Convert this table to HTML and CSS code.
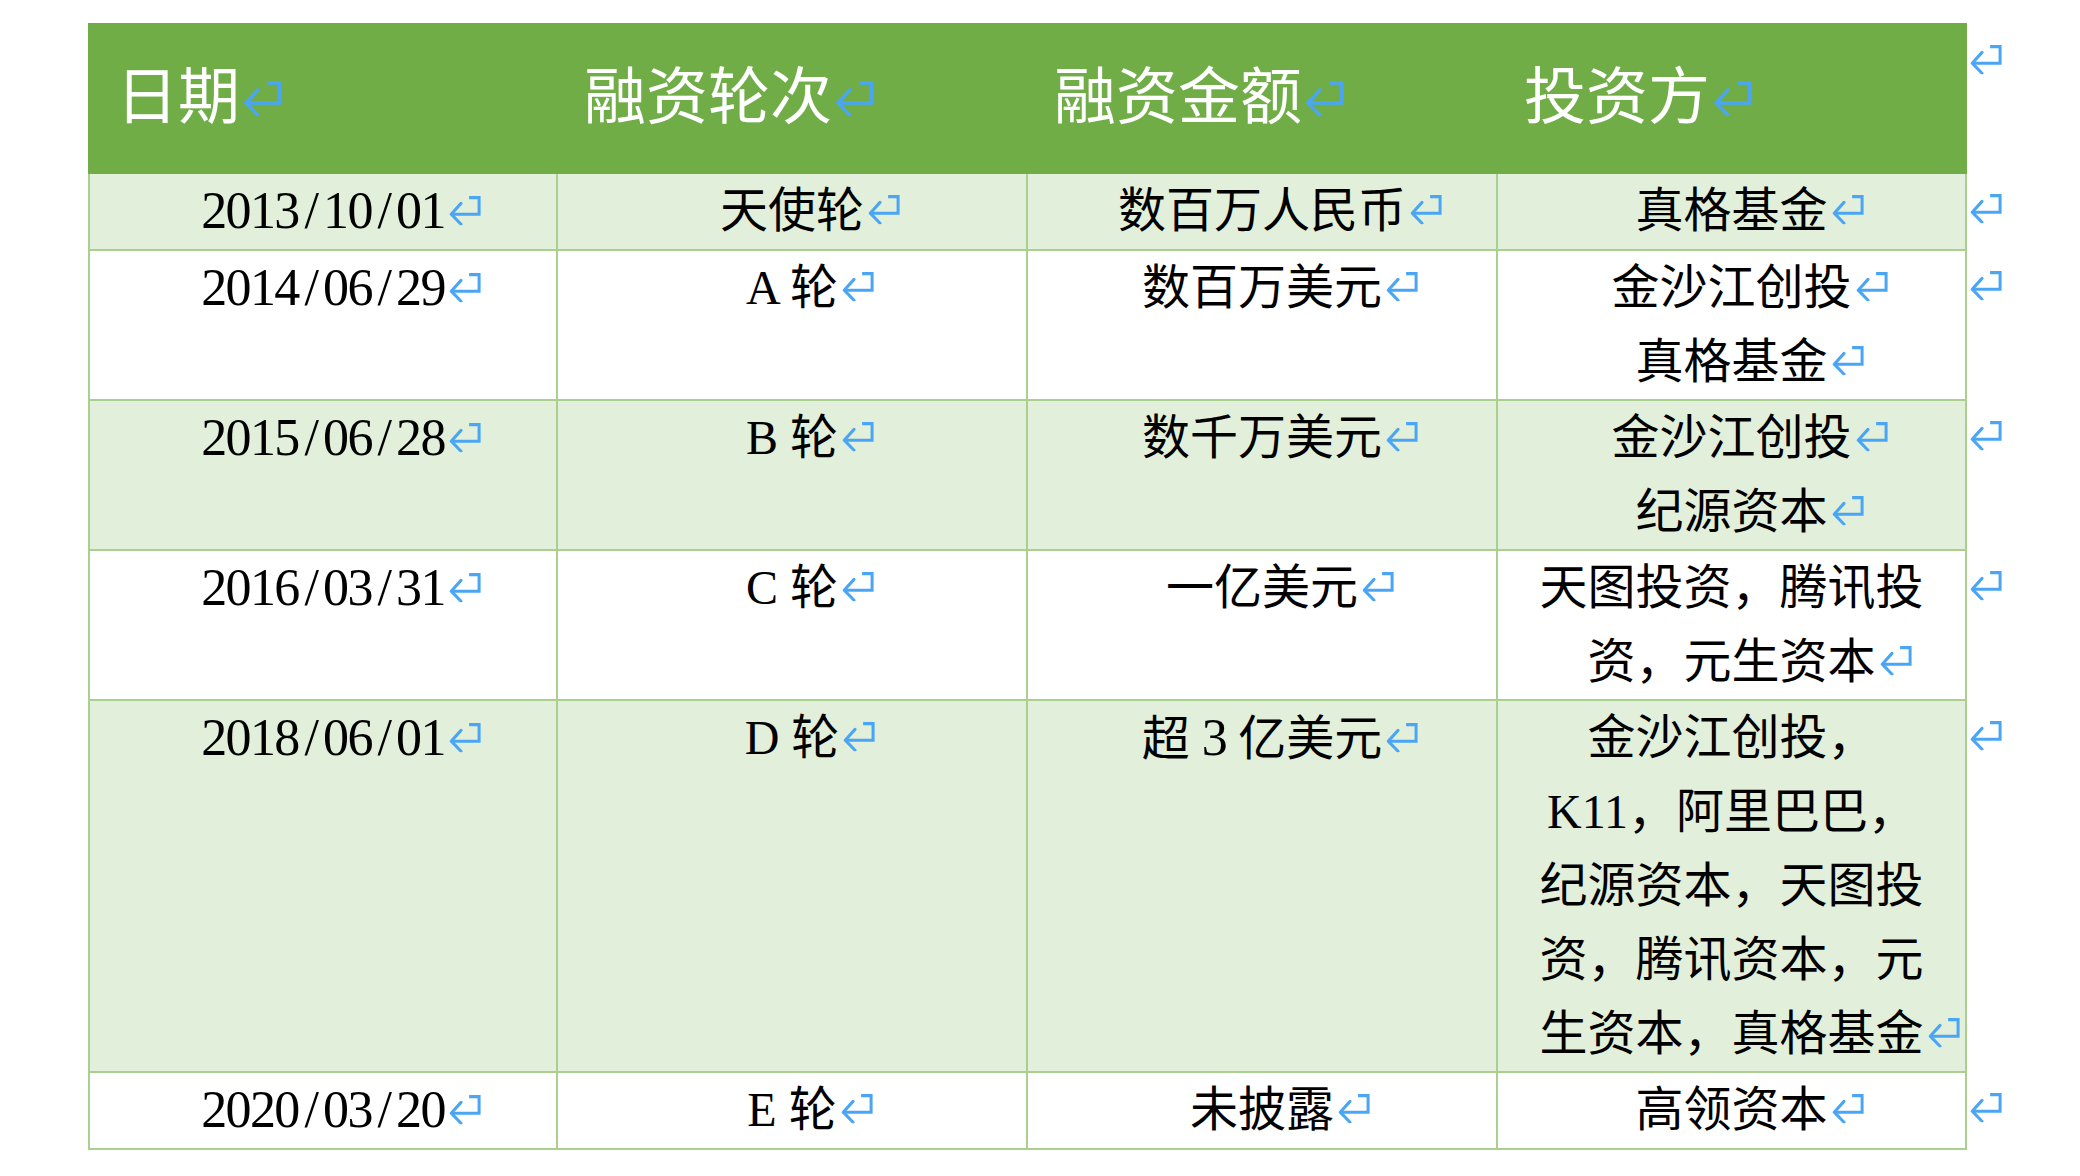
FILE: index.html
```html
<!DOCTYPE html>
<html lang="zh-CN">
<head>
<meta charset="utf-8">
<title>融资历程</title>
<link rel="stylesheet" href="styles.css">
</head>
<body>
<svg class="defs" aria-hidden="true">
  <symbol id="pm" viewBox="0 0 32 29">
    <path d="M20.5 1.6H30.4V18H3.2" fill="none" stroke="#4aa6f4" stroke-width="3"/>
    <path d="M12.5 7.3L2.8 18L12.5 28" fill="none" stroke="#4aa6f4" stroke-width="3" stroke-linecap="round" stroke-linejoin="round"/>
  </symbol>
</svg>
<table class="fin">
  <colgroup>
    <col class="c1"><col class="c"><col class="c"><col class="c4"><col class="m">
  </colgroup>
  <thead>
    <tr>
      <th>日期<svg class="pm"><use href="#pm"/></svg></th>
      <th>融资轮次<svg class="pm"><use href="#pm"/></svg></th>
      <th>融资金额<svg class="pm"><use href="#pm"/></svg></th>
      <th>投资方<svg class="pm"><use href="#pm"/></svg></th>
      <td class="end"><svg class="pm"><use href="#pm"/></svg></td>
    </tr>
  </thead>
  <tbody>
    <tr class="alt">
      <td><p><span class="num">2013<span class="sl">/</span>10<span class="sl">/</span>01</span><svg class="pm"><use href="#pm"/></svg></p></td>
      <td><p>天使轮<svg class="pm"><use href="#pm"/></svg></p></td>
      <td><p>数百万人民币<svg class="pm"><use href="#pm"/></svg></p></td>
      <td><p>真格基金<svg class="pm"><use href="#pm"/></svg></p></td>
      <td class="end"><svg class="pm"><use href="#pm"/></svg></td>
    </tr>
    <tr>
      <td><p><span class="num">2014<span class="sl">/</span>06<span class="sl">/</span>29</span><svg class="pm"><use href="#pm"/></svg></p></td>
      <td><p>A 轮<svg class="pm"><use href="#pm"/></svg></p></td>
      <td><p>数百万美元<svg class="pm"><use href="#pm"/></svg></p></td>
      <td><p>金沙江创投<svg class="pm"><use href="#pm"/></svg></p><p>真格基金<svg class="pm"><use href="#pm"/></svg></p></td>
      <td class="end"><svg class="pm"><use href="#pm"/></svg></td>
    </tr>
    <tr class="alt">
      <td><p><span class="num">2015<span class="sl">/</span>06<span class="sl">/</span>28</span><svg class="pm"><use href="#pm"/></svg></p></td>
      <td><p>B 轮<svg class="pm"><use href="#pm"/></svg></p></td>
      <td><p>数千万美元<svg class="pm"><use href="#pm"/></svg></p></td>
      <td><p>金沙江创投<svg class="pm"><use href="#pm"/></svg></p><p>纪源资本<svg class="pm"><use href="#pm"/></svg></p></td>
      <td class="end"><svg class="pm"><use href="#pm"/></svg></td>
    </tr>
    <tr>
      <td><p><span class="num">2016<span class="sl">/</span>03<span class="sl">/</span>31</span><svg class="pm"><use href="#pm"/></svg></p></td>
      <td><p>C 轮<svg class="pm"><use href="#pm"/></svg></p></td>
      <td><p>一亿美元<svg class="pm"><use href="#pm"/></svg></p></td>
      <td><p>天图投资，腾讯投资，元生资本<svg class="pm"><use href="#pm"/></svg></p></td>
      <td class="end"><svg class="pm"><use href="#pm"/></svg></td>
    </tr>
    <tr class="alt">
      <td><p><span class="num">2018<span class="sl">/</span>06<span class="sl">/</span>01</span><svg class="pm"><use href="#pm"/></svg></p></td>
      <td><p>D 轮<svg class="pm"><use href="#pm"/></svg></p></td>
      <td><p>超 <span class="num">3</span> 亿美元<svg class="pm"><use href="#pm"/></svg></p></td>
      <td><p>金沙江创投，K11，阿里巴巴，纪源资本，天图投资，腾讯资本，元生资本，真格基金<svg class="pm"><use href="#pm"/></svg></p></td>
      <td class="end"><svg class="pm"><use href="#pm"/></svg></td>
    </tr>
    <tr>
      <td><p><span class="num">2020<span class="sl">/</span>03<span class="sl">/</span>20</span><svg class="pm"><use href="#pm"/></svg></p></td>
      <td><p>E 轮<svg class="pm"><use href="#pm"/></svg></p></td>
      <td><p>未披露<svg class="pm"><use href="#pm"/></svg></p></td>
      <td><p>高领资本<svg class="pm"><use href="#pm"/></svg></p></td>
      <td class="end"><svg class="pm"><use href="#pm"/></svg></td>
    </tr>
  </tbody>
</table>
</body>
</html>
```

FILE: styles.css
```css
html, body {
  margin: 0;
  padding: 0;
  background: #ffffff;
}

body {
  font-family: "Liberation Serif", "Noto Sans CJK SC", serif;
  color: #000000;
}

.defs {
  width: 0;
  height: 0;
  overflow: hidden;
  display: block;
}

.fin {
  border-collapse: collapse;
  table-layout: fixed;
  margin: 23px 0 0 88px;
  width: 1957px;
}

.fin col.c1 {
  width: 468px;
}

.fin col.c {
  width: 470px;
}

.fin col.c4 {
  width: 469px;
}

.fin col.m {
  width: 80px;
}

.fin th {
  background: #70ad47;
  color: #ffffff;
  font-weight: normal;
  font-size: 62px;
  line-height: 1.2;
  text-align: left;
  vertical-align: middle;
  height: 147px;
  padding: 0 0 0 26px;
  border: 2px solid #70ad47;
}

.fin td {
  border: 2px solid #a9d08e;
  vertical-align: top;
  text-align: center;
  font-size: 48px;
  line-height: 74px;
  padding: 0 36px;
}

.fin tr.alt td {
  background: #e2efda;
}

.fin td.end,
.fin tr.alt td.end {
  background: none;
  border: none;
  text-align: left;
  padding: 0 0 0 2px;
}

.fin p {
  margin: 0;
}

.num {
  font-size: 52px;
  letter-spacing: -1.6px;
}

.sl {
  padding: 0 5.7px;
}

.pm {
  width: 0.69em;
  height: 0.61em;
  margin-left: 3px;
  margin-right: calc(-0.69em - 3px);
  vertical-align: 0.06em;
  overflow: visible;
}

.fin th .pm {
  width: 0.65em;
  height: 0.57em;
  margin-left: 2px;
  margin-right: calc(-0.65em - 2px);
  vertical-align: 0.05em;
}

.fin td.end .pm {
  margin-left: 0;
  margin-right: 0;
}
```
